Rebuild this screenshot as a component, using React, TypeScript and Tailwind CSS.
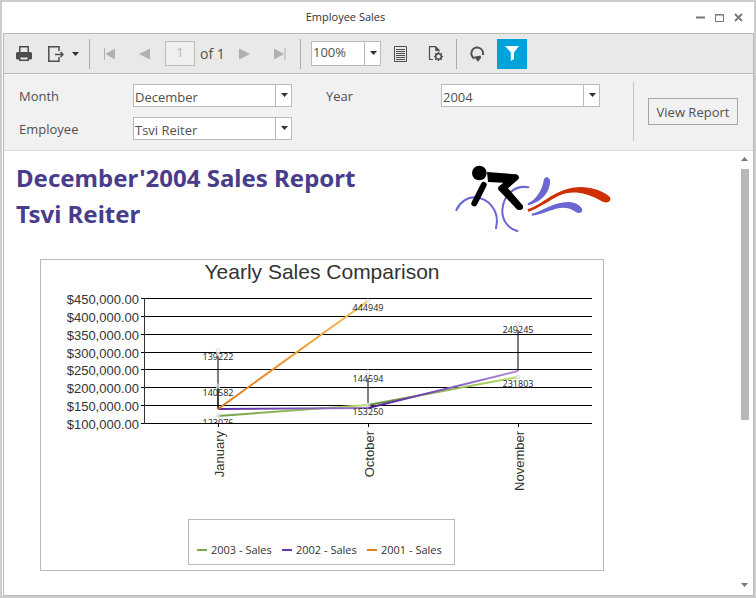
import type { ReactNode } from "react";

const UI = "font-['Open_Sans','Noto_Sans',sans-serif]";

function Caret({ className = "" }: { className?: string }) {
  return (
    <svg aria-hidden="true" className={className} width="7" height="4" viewBox="0 0 7 4">
      <path d="M0 0h7L3.5 4z" fill="currentColor" />
    </svg>
  );
}

function SelectBox({ id, label, options, className }: { id: string; label?: string; options: string[]; className: string }) {
  return (
    <div className={`relative ${className}`}>
      <select
        id={id}
        aria-label={label}
        className="h-full w-full appearance-none border border-[#bababa] bg-white pb-px pl-px pr-4 text-[#505050] outline-none"
      >
        {options.map((o) => (
          <option key={o}>{o}</option>
        ))}
      </select>
      <span className="pointer-events-none absolute inset-y-0 right-0 flex w-[17px] items-center justify-center border-l border-[#bababa] pb-px text-[#333]">
        <Caret />
      </span>
    </div>
  );
}

function ToolButton({ label, disabled, wide, active, children }: { label: string; disabled?: boolean; wide?: boolean; active?: boolean; children: ReactNode }) {
  return (
    <button
      type="button"
      aria-label={label}
      disabled={disabled}
      className={`flex h-[30px] shrink-0 items-center justify-center ${wide ? "w-10 gap-2 pr-[2px]" : "w-[30px]"} ${
        active ? "bg-[#00a2dc] text-white" : disabled ? "text-[#b0b0b0]" : "text-[#4d4d4d]"
      }`}
    >
      {children}
    </button>
  );
}

function Separator() {
  return <span className="h-[30px] w-px shrink-0 bg-[#ababab]" />;
}

function Toolbar() {
  return (
    <div className="flex h-10 items-center gap-[5px] border-b border-[#bababa] bg-[#e9e9e7] pl-[5px]">
      <ToolButton label="Print">
        <svg width="16" height="16" viewBox="0 0 16 16" fill="currentColor">
          <path fillRule="evenodd" d="M3 0h10v6h1.500a1.500 1.500 0 0 1 1.500 1.500V12a1.500 1.500 0 0 1-1.500 1.500H13V15H3v-1.500H1.500A1.500 1.500 0 0 1 0 12V7.500A1.500 1.500 0 0 1 1.500 6H3zM4.500 1.500V6h7V1.500zM4.500 11.500v2h7v-2z" />
        </svg>
      </ToolButton>
      <ToolButton label="Export" wide>
        <svg width="16" height="16" viewBox="0 0 16 16" fill="none" stroke="currentColor" strokeWidth="1.500">
          <path d="M11 5V.8H.8v14.400H11V11" />
          <path d="M7 8.500h7.500M12.500 6l2.500 2.500-2.500 2.500" />
        </svg>
        <Caret className="text-[#333]" />
      </ToolButton>
      <Separator />
      <ToolButton label="First page" disabled>
        <svg width="12" height="12" viewBox="0 0 12 12" fill="currentColor">
          <path d="M0 0h1v12H0zM11 .5v11L1.500 6z" />
        </svg>
      </ToolButton>
      <ToolButton label="Previous page" disabled>
        <svg width="12" height="12" viewBox="0 0 12 12" fill="currentColor">
          <path d="M11 .5v11L0 6z" />
        </svg>
      </ToolButton>
      <input
        aria-label="Current page"
        defaultValue="1"
        disabled
        className="h-[25px] w-[30px] border border-[#bababa] bg-[#efefed] pb-1 text-center text-[13px] text-[#b8b8b8]"
      />
      <span className="w-[25px] shrink-0 whitespace-nowrap text-[14px] text-[#505050]">of 1</span>
      <ToolButton label="Next page" disabled>
        <svg width="12" height="12" viewBox="0 0 12 12" fill="currentColor">
          <path d="M0 .5v11L11 6z" />
        </svg>
      </ToolButton>
      <ToolButton label="Last page" disabled>
        <svg width="12" height="12" viewBox="0 0 12 12" fill="currentColor">
          <path d="M11.500 0h-1v12h1zM0 .5v11L10 6z" />
        </svg>
      </ToolButton>
      <Separator />
      <SelectBox id="zoom" label="Zoom" options={["100%", "150%", "200%"]} className="ml-[5px] h-[25px] w-[70px] shrink-0 text-[13px]" />
      <ToolButton label="Print layout">
        <svg width="15" height="16" viewBox="0 0 15 16" fill="none" stroke="currentColor">
          <path d="M.5.5h12v15H.5zM2 3.500h9M2 5.500h9M2 7.500h9M2 9.500h9M2 11.500h9M2 13.500h9" />
        </svg>
      </ToolButton>
      <ToolButton label="Page setup">
        <svg width="16" height="16" viewBox="0 0 16 16" fill="none" stroke="currentColor">
          <path d="M5 13.500H1.500V.7h6l3.500 3.500V5.500" strokeWidth="1.200" />
          <path d="M7.500.7v4H11z" fill="currentColor" strokeWidth=".6" />
          <circle cx="10.500" cy="10.500" r="2.800" strokeWidth="1.500" />
          <path d="M10.500 6v1.700M10.500 13.300V15M6 10.500h1.700M13.300 10.500H15M7.300 7.300l1.200 1.200M12.500 12.500l1.200 1.200M13.700 7.300l-1.200 1.200M8.500 12.500l-1.200 1.200" strokeWidth="1.400" />
        </svg>
      </ToolButton>
      <Separator />
      <ToolButton label="Refresh">
        <svg width="16" height="16" viewBox="0 0 16 16" fill="none" stroke="currentColor">
          <path d="M5.500 12.500A5.800 5.800 0 1 1 14 7.300V9" strokeWidth="2" />
          <path d="M5 10.800L11.800 9.500 12 12 9 15.800z" fill="currentColor" stroke="none" />
        </svg>
      </ToolButton>
      <ToolButton label="Toggle parameters area" active>
        <svg width="14" height="15" viewBox="0 0 14 15" fill="currentColor">
          <path d="M0 0h14L9 6.500V13l-3.200 2V6.500z" />
        </svg>
      </ToolButton>
    </div>
  );
}

function Parameters() {
  return (
    <form className="flex items-start border-b border-[#dcdcdc] bg-[#f1f1f1] pb-[9px] pl-[15px] pt-2 text-[13px] text-[#505050]">
      <div className="mt-[2px] grid grid-cols-[114px_159px_149px_159px] gap-y-[10px] pr-[33px] leading-[25px]">
        <label htmlFor="month" className="h-[23px]">Month</label>
        <SelectBox id="month" options={["December", "November", "October", "January"]} className="h-[23px]" />
        <label htmlFor="year" className="h-[23px] pl-[34px]">Year</label>
        <SelectBox id="year" options={["2004", "2003", "2002", "2001"]} className="h-[23px]" />
        <label htmlFor="employee" className="h-[23px]">Employee</label>
        <SelectBox id="employee" options={["Tsvi Reiter"]} className="h-[23px]" />
      </div>
      <div className="flex h-[59px] items-center border-l border-[#c6c6c6] pl-[14px]">
        <button type="button" className="h-[27px] w-[90px] whitespace-nowrap border border-[#a5a5a5] bg-[#f1f1f1] pt-px leading-6">
          View Report
        </button>
      </div>
    </form>
  );
}

function CyclistLogo() {
  return (
    <svg role="img" aria-label="Cyclist" width="158" height="69" viewBox="42 42 474 207" fill="none" strokeLinecap="round" strokeLinejoin="round">
      <g stroke="#6a66d2" strokeWidth="6">
        <path d="M49 180C60 155 82 142 104 142C146 145 181 182 168 235" />
        <path d="M265 112C225 104 190 135 187 180C186 210 203 235 232 243" />
      </g>
      <path d="M263 160C285 151 305 125 311 92C312 77 329 79 330 92C331 130 300 157 264 166z" fill="#6a66d2" />
      <path d="M275 191C310 183 340 156 385 156C408 157 422 167 427 179C427 190 414 192 404 184C365 155 322 192 276 197z" fill="#6a66d2" />
      <path d="M263 178C310 164 345 112 425 111C462 113 490 124 509 140C517 153 502 162 488 155C398 105 360 135 325 155C300 169 280 181 264 185z" fill="#cf3000" />
      <circle cx="118" cy="69" r="22" fill="#000" />
      <path d="M131 105L103 160" stroke="#000" strokeWidth="18" />
      <path d="M141 66L229 73Q241 78 235 88L204 115L248 166Q253 179 239 180Q233 181 229 176L175 119Q172 111 179 107L190 98L144 96z" fill="#000" />
    </svg>
  );
}

const TICKS = ["$450,000.00", "$400,000.00", "$350,000.00", "$300,000.00", "$250,000.00", "$200,000.00", "$150,000.00", "$100,000.00"];
const TICK_Y = [12, 30, 48, 66, 83, 101, 119, 137];
const MONTHS = [
  { name: "January", x: 177 },
  { name: "October", x: 327 },
  { name: "November", x: 477 },
];
const SEGMENTS = [
  { id: "g1", from: "#6f9e48", to: "#b9de68", x1: 177, y1: 130, x2: 327, y2: 119 },
  { id: "g2", from: "#5f8f3c", to: "#b9de68", x1: 327, y1: 119, x2: 477, y2: 91 },
  { id: "p1", from: "#5a2aa0", to: "#9d7ad0", x1: 177, y1: 123, x2: 327, y2: 122 },
  { id: "p2", from: "#4d1f98", to: "#b58ddb", x1: 327, y1: 122, x2: 477, y2: 85 },
  { id: "o1", from: "#dd7415", to: "#f8c04e", x1: 177, y1: 123, x2: 327, y2: 15 },
];
const CONNECTORS = [
  { x: 177, y1: 70, y2: 123 },
  { x: 177, y1: 101, y2: 123 },
  { x: 327, y1: 92, y2: 121 },
  { x: 477, y1: 44, y2: 85 },
];
const POINTS = [
  { value: "139222", x: 177, dot: 65, text: 74 },
  { value: "140582", x: 177, dot: 100, text: 110 },
  { value: "123076", x: 177, dot: 130, text: 140 },
  { value: "444949", x: 327, dot: 15, text: 25 },
  { value: "144594", x: 327, dot: 86, text: 96 },
  { value: "153250", x: 327, dot: 119, text: 129 },
  { value: "249245", x: 477, dot: 38, text: 47 },
  { value: "231803", x: 477, dot: 91, text: 101 },
];

function Plot() {
  return (
    <svg role="img" aria-label="Yearly sales line chart" width="562" height="210" viewBox="0 0 562 210" className="block">
      <defs>
        {SEGMENTS.map((s) => (
          <linearGradient key={s.id} id={s.id} gradientUnits="userSpaceOnUse" x1={s.x1} y1={s.y1} x2={s.x2} y2={s.y2}>
            <stop offset="0" stopColor={s.from} />
            <stop offset="1" stopColor={s.to} />
          </linearGradient>
        ))}
        <clipPath id="plot-area">
          <rect x="100" y="0" width="451" height="137" />
        </clipPath>
      </defs>
      <g stroke="#000" shapeRendering="crispEdges">
        {TICK_Y.map((y) => (
          <path key={y} d={`M100 ${y + 0.5}H551`} />
        ))}
        <path d="M103.500 12V138" stroke="#333" />
        {MONTHS.map((m) => (
          <path key={m.name} d={`M${m.x + 0.5} 137V141`} />
        ))}
      </g>
      <g className="font-['Liberation_Sans',Arial,sans-serif]" fontSize="13" fill="#333">
        {TICKS.map((t, i) => (
          <text key={t} x="98" y={TICK_Y[i] + 6} textAnchor="end">
            {t}
          </text>
        ))}
        {MONTHS.map((m) => (
          <text key={m.name} transform={`translate(${m.x + 6} 145) rotate(-90)`} textAnchor="end">
            {m.name}
          </text>
        ))}
      </g>
      {CONNECTORS.map((c) => (
        <path key={`${c.x}-${c.y1}`} d={`M${c.x} ${c.y1}V${c.y2}`} stroke="#000" strokeOpacity=".5" strokeWidth="2" />
      ))}
      {SEGMENTS.map((s) => (
        <path key={s.id} d={`M${s.x1} ${s.y1}L${s.x2} ${s.y2}`} stroke={`url(#${s.id})`} strokeWidth="2" />
      ))}
      <g clipPath="url(#plot-area)" className={UI} fontSize="9" fill="#222" textAnchor="middle">
        {POINTS.map((p) => (
          <g key={p.value}>
            <circle cx={p.x} cy={p.dot} r="2" fill="#fff" fillOpacity=".5" stroke="#d8d8d8" />
            <text x={p.x} y={p.text}>{p.value}</text>
          </g>
        ))}
      </g>
    </svg>
  );
}

function Legend() {
  return (
    <ul className="ml-[147px] mb-[5px] mt-[23px] flex h-[46px] w-[267px] items-end gap-[9px] border border-[#bababa] pb-1 pl-2 text-[11px] leading-5 text-[#333]">
      {[
        ["2003 - Sales", "bg-[#7aa850]"],
        ["2002 - Sales", "bg-[#6638ac]"],
        ["2001 - Sales", "bg-[#e2811d]"],
      ].map(([name, swatch]) => (
        <li key={name} className="flex items-center gap-1 whitespace-nowrap">
          <span className={`h-[2px] w-[10px] ${swatch}`} />
          <span className="w-[62px]">{name}</span>
        </li>
      ))}
    </ul>
  );
}

function Report() {
  return (
    <main className="flex-1 pb-6 pl-3">
      <header className="grid grid-cols-[438px_auto] pt-[9px]">
        <h1 className="font-['Noto_Sans','Open_Sans',Tahoma,sans-serif] text-[24px] font-bold leading-9 text-[#483d8b]">
          December'2004 Sales Report
          <br />
          Tsvi Reiter
        </h1>
        <div className="pt-1">
          <CyclistLogo />
        </div>
      </header>
      <section className="ml-6 mt-[26px] w-[564px] border border-[#bababa]">
        <h2 className="h-[26px] text-center font-['Liberation_Sans',Arial,sans-serif] text-[21px] leading-[23px] text-[#333]">
          Yearly Sales Comparison
        </h2>
        <Plot />
        <Legend />
      </section>
    </main>
  );
}

function ScrollRail() {
  return (
    <div className="flex w-[13px] shrink-0 flex-col items-center pb-2 pr-1 pt-[6px] text-[#777]">
      <Caret className="rotate-180" />
      <div className="mt-2 h-[251px] w-2 bg-[#b8b8b8]" />
      <Caret className="mt-auto" />
    </div>
  );
}

export default function App() {
  return (
    <div className={`flex min-h-screen flex-col border-2 border-[#cccccc] bg-white pl-px text-[#333] ${UI}`}>
      <div className="flex h-[31px] items-center">
        <div className="flex-1 pr-2 text-center text-[11px]">Employee Sales</div>
        <div className="flex items-center gap-[10px] pr-[11px] text-[#777]">
          <button type="button" aria-label="Minimize">
            <svg width="9" height="9" viewBox="0 0 9 9">
              <path d="M0 4.500h9" stroke="currentColor" strokeWidth="2" />
            </svg>
          </button>
          <button type="button" aria-label="Maximize">
            <svg width="9" height="8" viewBox="0 0 9 8" fill="none" stroke="currentColor">
              <path d="M.5.5h8v7h-8zM0 1h9" />
            </svg>
          </button>
          <button type="button" aria-label="Close">
            <svg width="9" height="9" viewBox="0 0 9 9">
              <path d="M1 1l7 7M8 1L1 8" stroke="currentColor" strokeWidth="1.800" />
            </svg>
          </button>
        </div>
      </div>
      <div className="flex flex-1 flex-col border border-[#bababa]">
        <Toolbar />
        <Parameters />
        <div className="flex flex-1">
          <Report />
          <ScrollRail />
        </div>
      </div>
    </div>
  );
}
